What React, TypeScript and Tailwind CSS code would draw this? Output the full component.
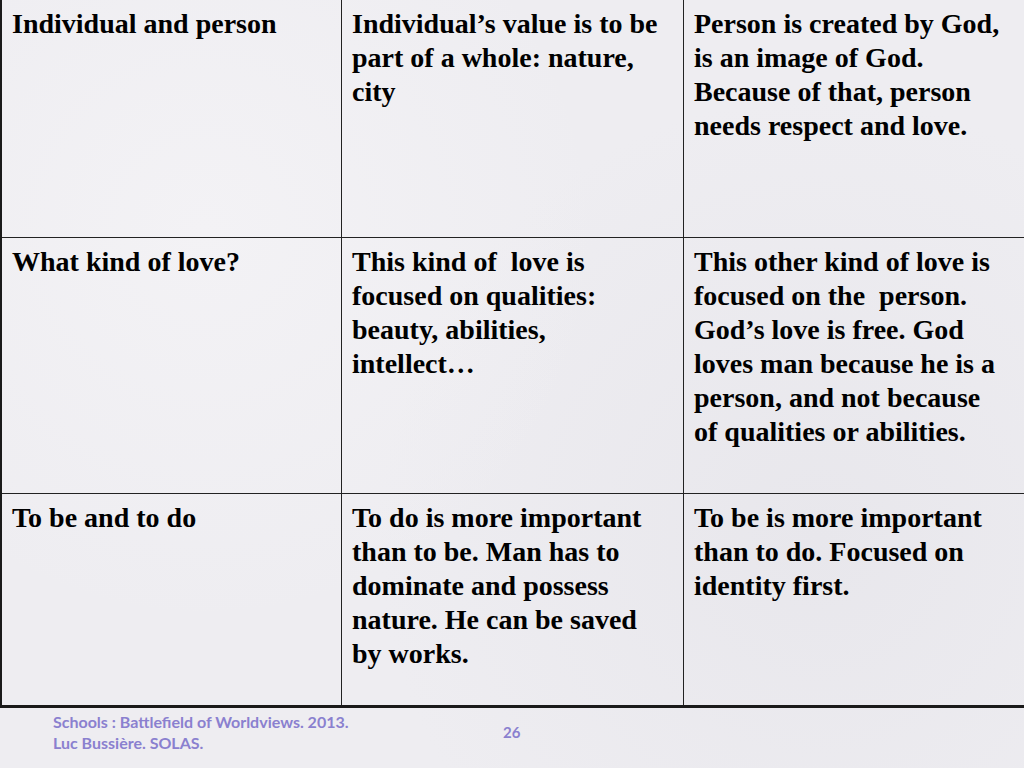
import React from 'react';

const rows: { h: string; cells: string[] }[] = [
  {
    h: 'h-[238px]',
    cells: [
      'Individual and person',
      'Individual’s value is to be part of a whole: nature, city',
      'Person is created by God, is an image of God. Because of that, person needs respect and love.',
    ],
  },
  {
    h: 'h-[256px]',
    cells: [
      'What kind of love?',
      'This kind of  love is focused on qualities: beauty, abilities, intellect…',
      'This other kind of love is focused on the  person. God’s love is free. God loves man because he is a person, and not because of qualities or abilities.',
    ],
  },
  {
    h: 'h-[211px]',
    cells: [
      'To be and to do',
      'To do is more important than to be. Man has to dominate and possess nature. He can be saved by works.',
      'To be is more important than to do. Focused on identity first.',
    ],
  },
];

const App = () => {
  return (
    <div className="w-[1024px] h-[768px] overflow-hidden bg-[#eeedf1] bg-[radial-gradient(circle_at_20%_30%,#f3f2f5_0,transparent_40%),radial-gradient(circle_at_80%_70%,#e8e7ec_0,transparent_45%)]">
      <div className="w-[1026px] border-l-2 border-b-[3px] border-[#1a1a1a]">
        {rows.map((row, i) => (
          <div
            key={i}
            className={`grid grid-cols-[340px_342px_344px] ${row.h} ${i < rows.length - 1 ? 'border-b border-[#222]' : ''}`}
          >
            {row.cells.map((text, j) => (
              <div
                key={j}
                className={`pl-[10px] pr-[18px] pt-[7px] text-[28px] leading-[34px] font-bold text-black font-['Liberation_Serif',serif] whitespace-pre-wrap ${j < 2 ? 'border-r border-[#222]' : ''}`}
              >
                {text}
              </div>
            ))}
          </div>
        ))}
      </div>
      <div className="flex items-center pl-[53px] pt-[3px] text-[#8a80cf] font-['Lato',sans-serif] font-bold">
        <div className="text-[16px] leading-[21px] w-[450px]">
          <div>Schools : Battlefield of Worldviews. 2013.</div>
          <div>Luc Bussière. SOLAS.</div>
        </div>
        <div className="text-[15px] leading-[21px]">26</div>
      </div>
    </div>
  );
};

export default App;
